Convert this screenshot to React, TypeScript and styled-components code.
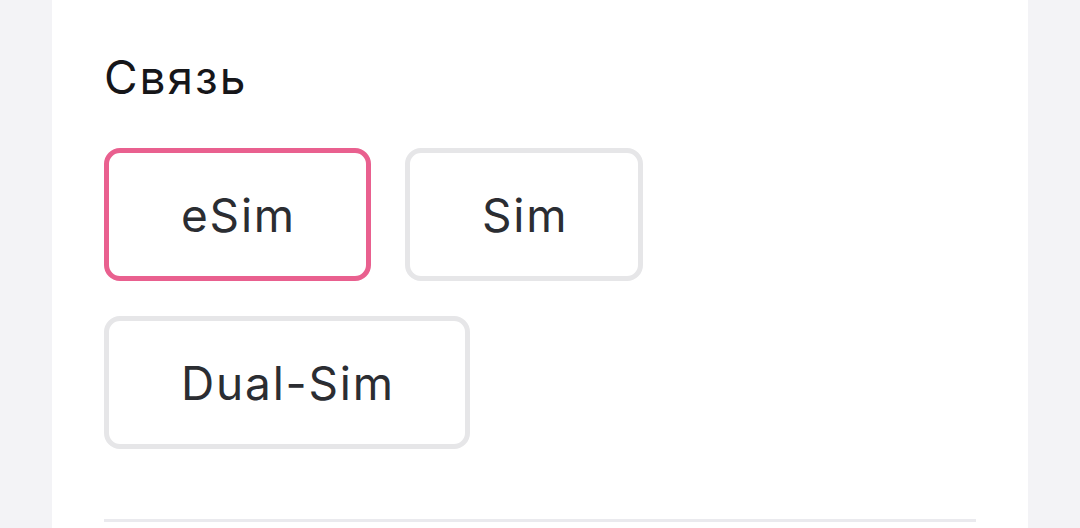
import React, { useState } from "react";
import styled, { createGlobalStyle } from "styled-components";

const GlobalStyle = createGlobalStyle`
  html, body {
    margin: 0;
    padding: 0;
    background: #f3f3f6;
    font-family: Inter, "Noto Sans", sans-serif;
  }
`;

const options = ["eSim", "Sim", "Dual-Sim"];

const App: React.FC = () => {
  const [selected, setSelected] = useState("eSim");
  return (
    <>
      <GlobalStyle />
      <Page>
        <Card>
          <Title>Связь</Title>
          <OptionList>
            {options.map((o) => (
              <Option key={o} $active={o === selected} onClick={() => setSelected(o)}>
                {o}
              </Option>
            ))}
          </OptionList>
          <Divider />
        </Card>
      </Page>
    </>
  );
};

const Page = styled.div`
  display: flex;
  padding: 0 52px;
  height: 528px;
  overflow: hidden;
`;

const Card = styled.div`
  flex: 1;
  background: #ffffff;
  padding: 49px 52px 0;
`;

const Title = styled.div`
  font-size: 46px;
  line-height: 56px;
  letter-spacing: 2px;
  color: #161619;
  font-weight: 400;
`;

const OptionList = styled.div`
  display: flex;
  flex-wrap: wrap;
  gap: 35px 34px;
  margin-top: 43px;
  max-width: 580px;
`;

const Option = styled.button<{ $active: boolean }>`
  box-sizing: border-box;
  height: 133px;
  padding: 0 70px 0 72px;
  display: flex;
  align-items: center;
  justify-content: center;
  background: #ffffff;
  border: 5px solid ${(p) => (p.$active ? "#e9608f" : "#e6e6e8")};
  border-radius: 16px;
  font-family: Inter, "Noto Sans", sans-serif;
  font-size: 46px;
  letter-spacing: 1.8px;
  color: #2b2d32;
  cursor: pointer;
`;

const Divider = styled.div`
  height: 3px;
  background: #eaeaee;
  margin-top: 70px;
`;

export default App;
